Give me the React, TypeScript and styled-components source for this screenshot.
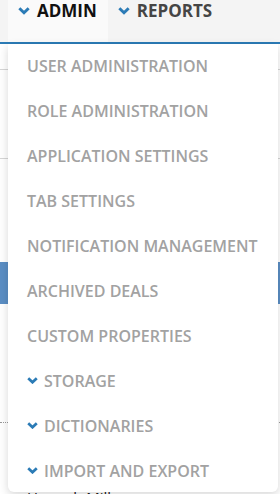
import React from "react";
import styled, { createGlobalStyle } from "styled-components";

const Global = createGlobalStyle`
  html, body { margin: 0; padding: 0; background: #ffffff; }
  body { font-family: "Open Sans", "Liberation Sans", sans-serif; overflow: hidden; }
  #root { width: 280px; height: 494px; }
`;

const Page = styled.div`
  position: relative;
  width: 280px;
  height: 494px;
  overflow: hidden;
  background: #ffffff;
`;

const NavBar = styled.div`
  display: flex;
  align-items: stretch;
  height: 42px;
  padding-left: 8px;
  background: #f4f4f4;
  border-bottom: 2px solid #2b7bb6;
`;

const Tab = styled.div<{ $active?: boolean }>`
  display: flex;
  align-items: flex-start;
  padding: 0 11px 0 10px;
  height: 42px;
  background: ${(p) => (p.$active ? "#fafafa" : "transparent")};
  color: ${(p) => (p.$active ? "#111111" : "#454545")};
  font-weight: 700;
  font-size: 17px;
  line-height: 22px;
`;

const TabLabel = styled.span`
  display: flex;
  align-items: center;
  gap: 7px;
  height: 22px;
`;

const Chevron = ({ size = 12 }: { size?: number }) => (
  <svg width={size} height={size * 0.62} viewBox="0 0 12 7.5" style={{ flex: "none" }}>
    <path d="M1.3 1.3 L6 5.8 L10.7 1.3" fill="none" stroke="#2b7bb6" strokeWidth="3" strokeLinecap="butt" strokeLinejoin="miter" />
  </svg>
);

const Content = styled.div`
  display: flex;
  flex-direction: column;
`;

const Gap = styled.div<{ $h: number }>`
  height: ${(p) => p.$h}px;
`;

const Rule = styled.div<{ $dotted?: boolean }>`
  height: 0;
  border-top: 1px ${(p) => (p.$dotted ? "dotted #999999" : "solid #d6d6d6")};
`;

const BlueBand = styled.div`
  height: 42px;
  background: #5b8ec4;
`;

const BgText = styled.div`
  padding-left: 27px;
  font-size: 15px;
  color: #222222;
  line-height: 20px;
`;

const Dropdown = styled.div`
  position: absolute;
  left: 8px;
  top: 44px;
  width: 270px;
  height: 448px;
  background: #ffffff;
  border-radius: 0 0 6px 6px;
  box-shadow: 0 3px 10px rgba(0, 0, 0, 0.16);
  display: flex;
  flex-direction: column;
`;

const Item = styled.div`
  display: flex;
  align-items: center;
  gap: 6px;
  height: 45px;
  flex: none;
  padding-left: 19px;
  color: #a2a2a2;
  font-weight: 600;
  font-size: 16px;
  white-space: nowrap;
  margin-top: -1px;
  margin-bottom: 1px;
`;

const items: { label: string; sub?: boolean }[] = [
  { label: "USER ADMINISTRATION" },
  { label: "ROLE ADMINISTRATION" },
  { label: "APPLICATION SETTINGS" },
  { label: "TAB SETTINGS" },
  { label: "NOTIFICATION MANAGEMENT" },
  { label: "ARCHIVED DEALS" },
  { label: "CUSTOM PROPERTIES" },
  { label: "STORAGE", sub: true },
  { label: "DICTIONARIES", sub: true },
  { label: "IMPORT AND EXPORT", sub: true },
];

export default function App() {
  return (
    <Page>
      <Global />
      <NavBar>
        <Tab $active>
          <TabLabel>
            <Chevron />
            ADMIN
          </TabLabel>
        </Tab>
        <Tab>
          <TabLabel>
            <Chevron />
            REPORTS
          </TabLabel>
        </Tab>
      </NavBar>
      <Content>
        <Gap $h={25} />
        <Rule />
        <Gap $h={88} />
        <Rule />
        <Gap $h={103} />
        <BlueBand />
        <Gap $h={118} />
        <Rule $dotted />
        <Gap $h={64} />
        <BgText>Hannah Miller</BgText>
      </Content>
      <Dropdown>
        {items.map((it) => (
          <Item key={it.label}>
            {it.sub && <Chevron size={11} />}
            {it.label}
          </Item>
        ))}
      </Dropdown>
    </Page>
  );
}
